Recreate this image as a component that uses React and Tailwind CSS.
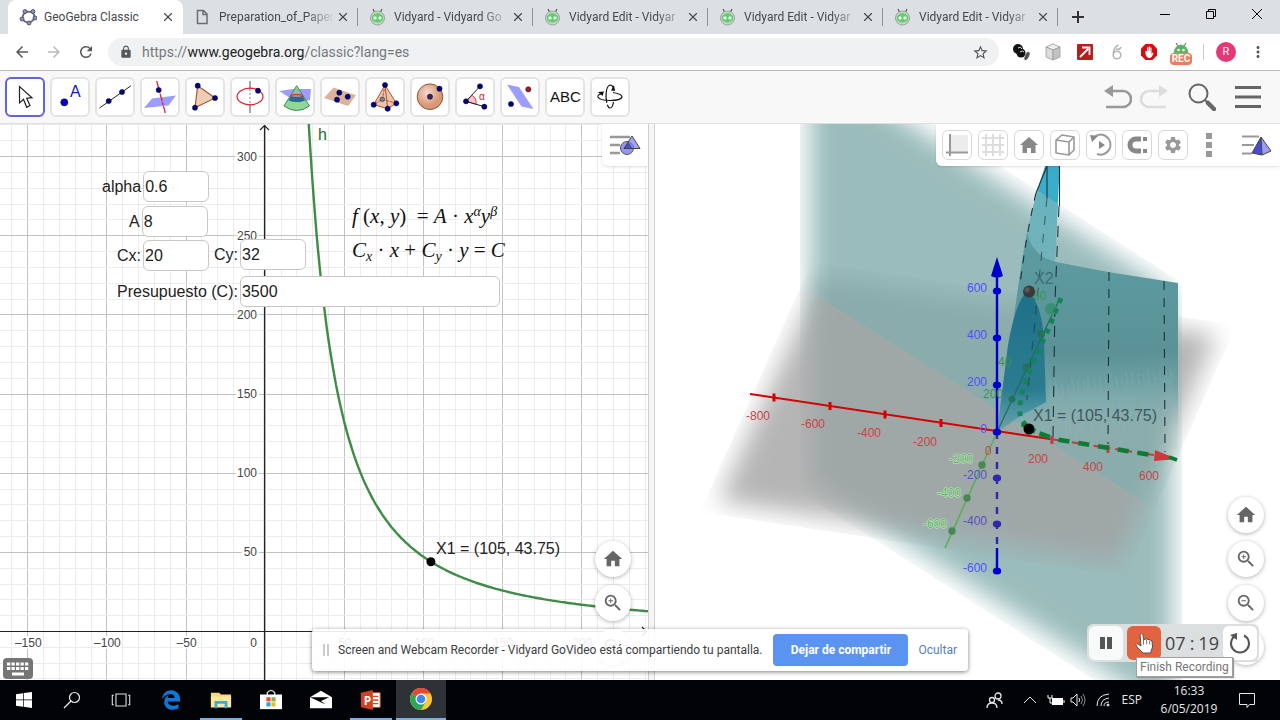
import React from "react";
import { FaEdgeLegacy } from "react-icons/fa6";
import { MdHome, MdZoomIn, MdZoomOut, MdSettings, MdLock, MdArrowBack, MdArrowForward, MdRefresh, MdStarBorder, MdMoreVert } from "react-icons/md";
import { FiX } from "react-icons/fi";

const NAVY = "#00008b";

function Dot({ x, y, r = 2.6, fill = NAVY }) {
  return <circle cx={x} cy={y} r={r} fill={fill} stroke="#111" strokeWidth="0.5" />;
}

/* ---------- browser chrome ---------- */

function GeoGebraLogo() {
  const pts = [[6, 3.5], [14, 3.5], [16, 10], [10, 15], [3, 11]];
  return (
    <svg viewBox="0 0 18 18" className="h-[18px] w-[18px] shrink-0">
      <ellipse cx="9.5" cy="9" rx="6" ry="5.3" transform="rotate(-15 9.5 9)" fill="none" stroke="#666" strokeWidth="1.8" />
      {pts.map(([x, y]) => (
        <circle key={x} cx={x} cy={y} r="2" fill="#8f8fe0" stroke="#444" strokeWidth="0.8" />
      ))}
    </svg>
  );
}

function FileIcon() {
  return (
    <svg viewBox="0 0 18 18" className="h-[18px] w-[18px] shrink-0" fill="none" stroke="#6b6f73" strokeWidth="1.5">
      <path d="M3.500 2.500h6l3.500 3.500v9.500h-9.500z M9 2.500v4h4" />
    </svg>
  );
}

function VidyardIcon() {
  return (
    <svg viewBox="0 0 18 18" className="h-[18px] w-[18px] shrink-0">
      <path d="M4 1l2 4M13 1l-2 4" stroke="#555" strokeWidth="1.200" />
      <circle cx="8.500" cy="10" r="7" fill="#c9d3cc" stroke="#8b968f" strokeWidth="0.8" />
      <path d="M3 8q5.500-6 11 0v4q-5.500 5-11 0z" fill="#5fd068" />
      <rect x="4.500" y="8.500" width="3" height="3" rx="1" fill="#fff" />
      <rect x="9.500" y="8.500" width="3" height="3" rx="1" fill="#fff" />
    </svg>
  );
}

const tabs = [
  { title: "GeoGebra Classic", icon: <GeoGebraLogo />, active: true },
  { title: "Preparation_of_Paper", icon: <FileIcon /> },
  { title: "Vidyard - Vidyard Go", icon: <VidyardIcon /> },
  { title: "Vidyard Edit - Vidyar", icon: <VidyardIcon /> },
  { title: "Vidyard Edit - Vidyar", icon: <VidyardIcon /> },
  { title: "Vidyard Edit - Vidyar", icon: <VidyardIcon /> },
];

function Tab({ title, icon, active }) {
  return (
    <div
      className={
        active
          ? "flex h-[34px] w-[175px] min-w-0 items-center rounded-t-lg bg-white pl-[11px] pr-[7px]"
          : "relative flex h-[34px] w-[175px] min-w-0 items-center pl-[11px] pr-[7px] after:absolute after:right-0 after:top-2 after:h-[18px] after:w-px after:bg-[#8f9296]"
      }
    >
      {icon}
      <a
        href="#tab"
        className={
          active
            ? "ml-[7px] min-w-0 flex-1 whitespace-nowrap text-xs text-[#45494d]"
            : "ml-[7px] min-w-0 flex-1 overflow-hidden whitespace-nowrap text-xs text-[#45494d] [mask-image:linear-gradient(to_right,#000_75%,transparent)]"
        }
      >
        {title}
      </a>
      <button aria-label="Close tab" className="grid h-4 w-4 shrink-0 place-items-center text-[#45494d]">
        <FiX className="text-sm" />
      </button>
    </div>
  );
}

function TabStrip() {
  return (
    <div className="flex h-[34px] shrink-0 bg-[#dcdfe4] pl-2">
      {tabs.map((tab, i) => (
        <Tab key={i} {...tab} />
      ))}
      <button aria-label="New tab" className="grid w-10 place-items-center text-[#333]">
        <svg viewBox="0 0 12 12" className="h-3 w-3" stroke="currentColor" strokeWidth="2"><path d="M6 0v12M0 6h12" /></svg>
      </button>
      <div className="ml-auto flex h-7 text-black">
        <button aria-label="Minimize" className="grid w-[46px] place-items-center">
          <svg viewBox="0 0 12 12" className="h-3 w-3" stroke="currentColor"><path d="M1 6.500h10" /></svg>
        </button>
        <button aria-label="Restore" className="grid w-[46px] place-items-center">
          <svg viewBox="0 0 12 12" className="h-3 w-3" fill="none" stroke="currentColor"><path d="M1.500 3.500h7v7h-7z M3.500 3.500v-2h7v7h-2" /></svg>
        </button>
        <button aria-label="Close" className="grid w-[46px] place-items-center">
          <svg viewBox="0 0 12 12" className="h-3 w-3" stroke="currentColor"><path d="M1 1l10 10M11 1l-10 10" /></svg>
        </button>
      </div>
    </div>
  );
}

function Extensions() {
  return (
    <div className="flex items-center">
      <button aria-label="Extension" className="grid w-8 place-items-center">
        <svg viewBox="0 0 18 18" className="h-[18px] w-[18px]">
          <circle cx="6" cy="6" r="5" fill="#111" />
          <circle cx="9" cy="10" r="4.500" fill="#111" />
          <path d="M6 5q3-2 4 1M8 9q3-2 4 0" stroke="#ddd" fill="none" />
          <ellipse cx="15" cy="13" rx="2" ry="4.500" transform="rotate(25 15 13)" fill="#555" />
        </svg>
      </button>
      <button aria-label="3D viewer" className="grid w-8 place-items-center">
        <svg viewBox="0 0 18 18" className="h-[18px] w-[18px]" stroke="#9a9a9a" strokeWidth="0.8">
          <path d="M9 1l7 3-7 3-7-3z" fill="#efefef" />
          <path d="M2 4l7 3v10l-7-3z" fill="#dcdcdc" />
          <path d="M16 4l-7 3v10l7-3z" fill="#c2c2c2" />
        </svg>
      </button>
      <button aria-label="Picker" className="grid w-8 place-items-center">
        <svg viewBox="0 0 18 18" className="h-[18px] w-[18px]">
          <rect x="1" y="1" width="16" height="16" rx="1" fill="#b3201f" />
          <path d="M4 14l8-8M6 4.500h7.500V12" stroke="#fff" strokeWidth="1.800" fill="none" />
        </svg>
      </button>
      <button aria-label="Pear" className="grid w-8 place-items-center">
        <svg viewBox="0 0 18 18" className="h-[18px] w-[18px]" fill="none" stroke="#b5b5b5" strokeWidth="1.600">
          <circle cx="9" cy="12" r="3.800" />
          <path d="M5.500 11q0-7 5-9M8 6q4 1 5-2" />
        </svg>
      </button>
      <button aria-label="Ad blocker" className="grid w-8 place-items-center">
        <svg viewBox="0 0 18 18" className="h-[18px] w-[18px]">
          <path d="M5.500 1h7L17 5.500v7L12.500 17h-7L1 12.500v-7z" fill="#d40d12" />
          <path d="M5.500 8v3q1 4 4 4 2.500 0 4-5l-1-.5-1 1.500V4.500h-1.200V8H10V3.500H8.800V8h-.5V4.500H7V8z" fill="#fff" />
        </svg>
      </button>
      <button aria-label="Vidyard recording" className="flex w-8 flex-col items-center pt-1">
        <svg viewBox="0 0 18 10" className="h-[10px] w-[18px]">
          <path d="M4 0l2 3M14 0l-2 3" stroke="#555" />
          <path d="M2 10q1-8 7-8t7 8z" fill="#4fb65a" stroke="#8a8" />
          <circle cx="6.500" cy="7" r="1.300" fill="#fff" /><circle cx="11.500" cy="7" r="1.300" fill="#fff" />
        </svg>
        <span className="rounded-sm bg-[#ec7c5c] px-[2px] text-[10px] font-bold leading-3 text-white">REC</span>
      </button>
    </div>
  );
}

function AddressBar() {
  return (
    <div className="flex h-[37px] shrink-0 items-center border-b border-[#b9b9b9] bg-white pr-[13px] text-[#55585c]">
      <div className="flex w-[108px] items-center pl-[6px] text-[18px]">
        <button aria-label="Back" className="grid w-8 place-items-center"><MdArrowBack /></button>
        <button aria-label="Forward" className="grid w-8 place-items-center text-[#b8babc]"><MdArrowForward /></button>
        <button aria-label="Reload" className="grid w-8 place-items-center"><MdRefresh /></button>
      </div>
      <div className="flex h-7 flex-1 items-center rounded-full bg-[#eff1f2] pl-[11px] pr-[10px]">
        <MdLock className="text-[14px]" />
        <a href="#page" className="ml-[9px] text-sm text-[#75797d]">
          https://<span className="text-[#222]">www.geogebra.org</span>/classic?lang=es
        </a>
        <button aria-label="Bookmark" className="ml-auto"><MdStarBorder className="text-[17px]" /></button>
      </div>
      <div className="ml-[6px] mr-[6px]"><Extensions /></div>
      <span className="h-4 w-px bg-[#c8c8c8]" />
      <button className="ml-3 grid h-5 w-5 place-items-center rounded-full bg-[#e63777] text-[11px] text-white">R</button>
      <button aria-label="Menu" className="ml-[13px]"><MdMoreVert className="text-lg" /></button>
    </div>
  );
}

/* ---------- GeoGebra tool bar ---------- */

const tools = [
  {
    name: "Move",
    art: <path d="M14.500 9.500v16.500l4-3.700 3.200 8 3.300-1.800-3.300-7.300 5.300-.5z" fill="#fff" stroke="#222" strokeWidth="1.200" />,
  },
  {
    name: "Point",
    art: <><Dot x={14.300} y={25.300} r={3.600} fill="#0000cd" /><text x="20" y="20" fontSize="16" fill="#1515cc">A</text></>,
  },
  {
    name: "Line",
    art: <><path d="M4.500 31L36 8.700" stroke="#222" /><Dot x={13.700} y={24} /><Dot x={27} y={15} /></>,
  },
  {
    name: "Perpendicular line",
    art: (
      <>
        <path d="M4 31l8-9.500 24-3-7.500 10z" fill="#9d9dff" />
        <path d="M16.700 4l8.600 32" stroke="#e0203c" strokeWidth="1.300" strokeDasharray="8 1 3 1" />
        <Dot x={18.700} y={13} />
      </>
    ),
  },
  {
    name: "Polygon",
    art: <><path d="M12.700 8.700L30 21 10 30.700z" fill="#f1cdb8" stroke="#a55a35" strokeWidth="1.200" /><Dot x={12.700} y={8.700} /><Dot x={30} y={21} /><Dot x={10} y={30.700} /></>,
  },
  {
    name: "Circle with axis",
    art: (
      <>
        <path d="M20 4v8M20 27v9" stroke="#888" strokeWidth="1.500" /><path d="M20 12v15" stroke="#888" strokeDasharray="2 2" />
        <ellipse cx="20" cy="19.500" rx="13" ry="8.300" fill="none" stroke="#d8202c" strokeWidth="1.200" />
        <Dot x={28} y={13.700} />
      </>
    ),
  },
  {
    name: "Intersect surfaces",
    art: (
      <>
        <path d="M4 14l14-2 18 0-1 11-12 3z" fill="#9d9dff" />
        <path d="M21.700 8.700L9 29q12.700 9 25.500 0z" fill="#7bd08a" fillOpacity="0.85" stroke="#3a8f48" />
        <path d="M16 19l-2.500 4.500q8 3 16.500 0L27.500 19z" fill="#31659c" />
        <ellipse cx="21.700" cy="19" rx="6" ry="1.600" fill="#7a9cae" stroke="#d8202c" />
      </>
    ),
  },
  {
    name: "Plane through 3 points",
    art: <><path d="M4 21l9.500-10.500L36 18.300 28 29z" fill="#dbb29c" /><Dot x={19.300} y={15.700} /><Dot x={17} y={22.700} /><Dot x={27.700} y={19.700} /></>,
  },
  {
    name: "Pyramid",
    art: (
      <>
        <path d="M20 8L8.700 27.700l14 4 8.600-5.400z" fill="#edc3aa" stroke="#a55a35" />
        <path d="M20 8l2.700 23.700" stroke="#a55a35" />
        <path d="M20 8l-2.700 14.300-8.600 5.400M17.300 22.300l14 4" fill="none" stroke="#a55a35" strokeDasharray="3 1" />
        <Dot x={17.300} y={22.300} r={2.300} fill="#8b7d92" /><Dot x={20} y={8} /><Dot x={8.700} y={27.700} /><Dot x={22.700} y={31.700} /><Dot x={31.300} y={26.300} />
      </>
    ),
  },
  {
    name: "Sphere",
    art: <><circle cx="20" cy="19.700" r="12.800" fill="url(#ball)" stroke="#8d5437" /><Dot x={20} y={19.700} fill="#3b1f66" /><Dot x={29.500} y={11.700} /></>,
  },
  {
    name: "Angle",
    art: (
      <>
        <path d="M11 24.300l6-6q5 3 4 9z" fill="#ffc4c8" stroke="#e04050" />
        <path d="M25 9.300L11 24.300l18.300 5.400" fill="none" stroke="#222" />
        <text x="24" y="23" fontSize="10" fill="#d8202c">α</text>
        <Dot x={25} y={9.300} /><Dot x={11} y={24.300} /><Dot x={29.300} y={29.700} />
      </>
    ),
  },
  {
    name: "Reflect about plane",
    art: <><path d="M7 7.500l12 2.500 14.500 22-12-2.500z" fill="#9d9dff" /><Dot x={28.300} y={12.300} fill="#b81420" /><Dot x={11} y={27} /></>,
  },
  { name: "Text", art: <text x="20.500" y="25" fontSize="15" textAnchor="middle" fill="#111">ABC</text> },
  {
    name: "Rotate view",
    art: (
      <g fill="none" stroke="#111" strokeWidth="1.200">
        <path d="M12 16.500q-5 1.500-4 3.500 2 3.500 12 3.500 11 0 12-3.500 0-3-9-4.500" />
        <path d="M24 13q-1-5-4-5-4 1-4 12 1 11 4 11 2.500 0 3.500-6" strokeDasharray="26 2" />
        <path d="M21 13.500l4 .5-1-6zM8 15l6-.5-1.500 4.500z" fill="#111" stroke="none" />
      </g>
    ),
  },
];

function ToolBar() {
  return (
    <div className="flex h-[53px] shrink-0 items-center gap-[5px] border-b border-[#dedede] bg-[#f8f8f8] pl-[5px] pr-[19px]">
      {tools.map((tool, i) => (
        <button
          key={tool.name}
          aria-label={tool.name}
          className={
            i === 0
              ? "h-10 w-10 rounded-md border-2 border-[#6464d2] bg-white"
              : "h-10 w-10 rounded-md border-2 border-[#e4e4e4] bg-white"
          }
        >
          <svg viewBox="2 2 36 36" className="h-9 w-9" fontFamily="Liberation Sans">
            <defs>
              <radialGradient id="ball" cx="40%" cy="35%"><stop offset="0" stopColor="#f3d9cb" /><stop offset="1" stopColor="#d89878" /></radialGradient>
            </defs>
            {tool.art}
          </svg>
        </button>
      ))}
      <div className="ml-auto flex items-center text-[#666]">
        <button aria-label="Undo" className="mr-2 text-[#999]">
          <svg viewBox="0 0 28 26" className="h-[26px] w-7"><path d="M8 7h11a7 7 0 0 1 0 16H2" fill="none" stroke="currentColor" strokeWidth="2.600" /><path d="M0 7l9-6v12z" fill="currentColor" /></svg>
        </button>
        <button aria-label="Redo" className="mr-5 text-[#dcdcdc]">
          <svg viewBox="0 0 28 26" className="h-[26px] w-7"><path d="M20 7H9a7 7 0 0 0 0 16h17" fill="none" stroke="currentColor" strokeWidth="2.600" /><path d="M28 7l-9-6v12z" fill="currentColor" /></svg>
        </button>
        <button aria-label="Search" className="mr-[19px]">
          <svg viewBox="0 0 28 28" className="h-7 w-7"><circle cx="10.500" cy="10.500" r="9" fill="none" stroke="currentColor" strokeWidth="2" /><path d="M17 17l4 4" stroke="currentColor" strokeWidth="2" /><path d="M20 20l6 6" stroke="currentColor" strokeWidth="4.500" strokeLinecap="round" /></svg>
        </button>
        <button aria-label="Main menu">
          <svg viewBox="0 0 26 24" className="h-6 w-[26px]" stroke="currentColor" strokeWidth="3"><path d="M0 2.500h26M0 12h26M0 21.500h26" /></svg>
        </button>
      </div>
    </div>
  );
}

/* ---------- 2D graphics view ---------- */

const ORIGIN = { x: 264.700, y: 507 };
const UNIT = 1.583;

const toX = (x) => ORIGIN.x + x * UNIT;
const toY = (y) => ORIGIN.y - y * UNIT;

const curve = Array.from({ length: 230 }, (_, i) => {
  const x = 24 + i;
  return `${toX(x).toFixed(1)},${toY(43.750 * Math.pow(105 / x, 1.500)).toFixed(1)}`;
}).join(" ");

function Grid() {
  const cols = Array.from({ length: 42 }, (_, i) => (i - 16) * 10);
  const rows = Array.from({ length: 36 }, (_, i) => (i - 3) * 10);
  return (
    <g shapeRendering="crispEdges">
      {cols.map((x) => <path key={x} d={`M${Math.round(toX(x))} 0v560`} stroke={x % 50 ? "#ececec" : "#c2c2c2"} />)}
      {rows.map((y) => <path key={y} d={`M0 ${Math.round(toY(y))}h648`} stroke={y % 50 ? "#ececec" : "#c2c2c2"} />)}
    </g>
  );
}

function Plot() {
  return (
    <svg className="absolute inset-0 h-full w-full" fontFamily="Liberation Sans">
      <Grid />
      <path d="M264.500 2v558M0 507.500h646" stroke="#222" strokeWidth="1.200" />
      <path d="M260 6l4.500-4.500 4.500 4.500M642 503l4.500 4.500-4.500 4.500" fill="none" stroke="#222" strokeWidth="1.200" />
      <polyline points={curve} fill="none" stroke="#408c46" strokeWidth="2.400" />
      <g fontSize="12" fill="#444" stroke="#fff" strokeWidth="4" paintOrder="stroke">
        {[50, 100, 150, 200, 250, 300].map((v) => (
          <text key={v} x="257" y={toY(v) + 4.500} textAnchor="end">{v}</text>
        ))}
        {[-150, -100, -50, 50, 100, 150, 200].map((v) => (
          <text key={v} x={toX(v) + 1} y="523" textAnchor="middle">{v < 0 ? `–${-v}` : v}</text>
        ))}
        <text x="257" y="523" textAnchor="end">0</text>
      </g>
      <circle cx={toX(105)} cy={toY(43.750)} r="4.500" />
      <text x="436" y="430" fontSize="16" fill="#222">X1 = (105, 43.75)</text>
      <text x="318" y="16" fontSize="16" fill="#1f6b28">h</text>
    </svg>
  );
}

const fields = [
  { id: "alpha", label: "alpha", value: "0.6", place: "left-[102px] top-[47px]", width: "w-[66px]" },
  { id: "a", label: "A", value: "8", place: "left-[129px] top-[82px]", width: "w-[66px]" },
  { id: "cx", label: "Cx:", value: "20", place: "left-[117px] top-[116px]", width: "w-[66px]" },
  { id: "cy", label: "Cy:", value: "32", place: "left-[214px] top-[115px]", width: "w-[66px]" },
  { id: "budget", label: "Presupuesto (C):", value: "3500", place: "left-[117px] top-[152px]", width: "w-[260px]" },
];

function Field({ id, label, value, place, width }) {
  return (
    <div className={`absolute flex items-center gap-[2px] font-['Liberation_Sans',sans-serif] text-base text-[#222] ${place}`}>
      <label htmlFor={id} className="whitespace-nowrap">{label}</label>
      <input id={id} defaultValue={value} className={`h-[31px] rounded-md border border-[#c8c8c8] bg-white px-px ${width}`} />
    </div>
  );
}

function RoundButton({ label, children }) {
  return (
    <button aria-label={label} className="grid h-9 w-9 place-items-center rounded-full bg-white text-[22px] text-[#666] shadow-[0_1px_4px_rgba(0,0,0,0.3)]">
      {children}
    </button>
  );
}

function ZoomButtons() {
  return (
    <>
      <RoundButton label="Home"><MdHome /></RoundButton>
      <RoundButton label="Zoom in"><MdZoomIn /></RoundButton>
      <RoundButton label="Zoom out"><MdZoomOut /></RoundButton>
    </>
  );
}

function GraphView() {
  return (
    <section className="relative min-w-0 flex-[648] overflow-hidden bg-white">
      <Plot />
      {fields.map((f) => <Field key={f.id} {...f} />)}
      <div className="absolute left-[352px] top-[75px] whitespace-pre font-['Liberation_Serif',serif] text-[21px] leading-[34px] text-[#111]">
        <p><i>f</i> (<i>x</i>, <i>y</i>)  = <i>A</i> · <i>x</i><sup className="text-sm italic">α</sup><i>y</i><sup className="text-sm italic">β</sup></p>
        <p><i>C</i><sub className="text-sm italic">x</sub> · <i>x</i> + <i>C</i><sub className="text-sm italic">y</sub> · <i>y</i> = <i>C</i></p>
      </div>
      <button aria-label="Style bar" className="absolute right-0 top-0 grid h-[42px] w-[46px] place-items-center rounded-bl-md bg-white shadow">
        <svg viewBox="0 0 32 24" className="h-6 w-8">
          <path d="M1 4h20M1 12h10M1 20h10" stroke="#999" strokeWidth="2.400" />
          <circle cx="18" cy="15" r="6.500" fill="#9797f2" stroke="#555" />
          <path d="M23 3l8 12.500H15z" fill="#7d7df0" fillOpacity="0.7" stroke="#444" />
          <path d="M19.500 9l4 6.500H15z" fill="#2a2a9c" fillOpacity="0.6" />
        </svg>
      </button>
      <div className="absolute bottom-[15px] right-[17px] flex flex-col gap-2"><ZoomButtons /></div>
      <button aria-label="Keyboard" className="absolute bottom-px left-[3px] grid h-[21px] w-[30px] place-items-center rounded bg-[#757575] text-white">
        <svg viewBox="0 0 24 16" className="h-4 w-6" fill="currentColor">
          {[1, 5.500, 10, 14.500, 19].map((x) => <path key={x} d={`M${x} 1.500h3.300v3h-3.300zM${x} 6h3.300v3h-3.300z`} />)}
          <path d="M6 11.500h12v3H6z" />
        </svg>
      </button>
    </section>
  );
}

/* ---------- 3D graphics view ---------- */

const zTicks = [[291, "600"], [338, "400"], [385, "200"], [432, "0"], [478, "-200"], [524, "-400"], [571, "-600"]];
const redLabels = [[746, 420, "-800"], [801, 428, "-600"], [857, 437, "-400"], [913, 446, "-200"], [985, 455, "0"], [1028, 463, "200"], [1083, 471, "400"], [1139, 480, "600"]];
const greenLabels = [[949, 463, "-200"], [937, 497, "-400"], [923, 528, "-600"], [983, 398, "200"], [998, 366, "40"], [1033, 300, "60"]];
const stripes = Array.from({ length: 62 }, (_, i) => ({ x: 1050 + i * 2, y: 380 + ((i * 7) % 19) - i / 4, h: 26 + ((i * 11) % 24) }));

const BACK = "M801 286L811 262 1236 325 1155 509z";
const FRONT = "M801 286L1155 509 1126 576 700 512z";
const WALL = "M800 38L1182 283V736L800 492z";
const BODY = "M1047 160Q1028 215 1020 275L997 432 1048 402 1060 160z";
const CURTAIN = "M1027 232Q1032 256 1056 262L1108 272 1178 283V450L1050 432 997 432 1020 275z";

function Scene() {
  return (
    <svg viewBox="655 124 625 556" preserveAspectRatio="xMidYMid slice" className="absolute inset-0 h-full w-full" fontFamily="Liberation Sans">
      <defs>
        <filter id="soft" x="-20%" y="-20%" width="140%" height="140%"><feGaussianBlur stdDeviation="12" /></filter>
        <mask id="floorEdge" maskUnits="userSpaceOnUse" x="655" y="124" width="625" height="556">
          <path d="M719 501L821 276 1216 335 1118 562z" fill="#fff" filter="url(#soft)" />
        </mask>
        <mask id="wallEdge" maskUnits="userSpaceOnUse" x="655" y="0" width="625" height="800">
          <path d="M810 60L1172 292V714L810 482z" fill="#fff" filter="url(#soft)" />
        </mask>
        <clipPath id="wall"><path d={WALL} /></clipPath>
        <linearGradient id="curtain" x1="0" y1="0" x2="0" y2="1">
          <stop offset="0" stopColor="#5b9da2" />
          <stop offset="0.550" stopColor="#5b9297" />
          <stop offset="0.700" stopColor="#659ca0" stopOpacity="0.8" />
          <stop offset="0.900" stopColor="#7fb4b6" stopOpacity="0.1" />
        </linearGradient>
        <linearGradient id="cone" x1="0" y1="0" x2="0" y2="1">
          <stop offset="0" stopColor="#1d7188" />
          <stop offset="0.700" stopColor="#2b7c90" />
          <stop offset="1" stopColor="#4d97a4" stopOpacity="0.5" />
        </linearGradient>
        <radialGradient id="bead" cx="35%" cy="35%"><stop offset="0" stopColor="#666" /><stop offset="0.700" stopColor="#3c3636" /></radialGradient>
      </defs>

      <path d={BACK} fill="#b5b5b5" mask="url(#floorEdge)" />
      <path d={BODY} fill="#3aaccb" />
      <path d={WALL} fill="#7fa9a9" fillOpacity="0.78" mask="url(#wallEdge)" />
      <path d={BODY} fill="#70b6be" fillOpacity="0.75" clipPath="url(#wall)" />
      <path d={FRONT} fill="#a1a1a1" fillOpacity="0.79" mask="url(#floorEdge)" />
      <path d={CURTAIN} fill="url(#curtain)" />
      <path d="M1028 290Q1042 305 1044 340L1046 402 1020 416 997 432 1008 345Q1016 300 1028 290z" fill="url(#cone)" />
      {stripes.map((s) => <path key={s.x} d={`M${s.x} ${s.y}v${s.h}`} stroke="#9fc4c4" strokeOpacity="0.25" />)}

      <g fill="none" stroke="#1f3338" strokeWidth="1.100">
        <path d="M1036 193Q1026 235 1020 285" strokeDasharray="8 8" />
        <path d="M1047 198L1040 270 1027 400" strokeDasharray="9 9" strokeOpacity="0.6" />
        <path d="M1047 160v38M1059.500 160v46M1047 166l-11 27" />
        <path d="M1059 206L1055 300 1053 438" strokeDasharray="11 9" />
        <path d="M1109 272L1108 444M1164 281L1165 452" strokeDasharray="9 8" />
      </g>

      <path d="M997 432L1058 302" stroke="#28695f" strokeWidth="1.200" />
      <path d="M997 432L945 548" stroke="#55b055" strokeWidth="1.500" />
      <g fill="#27705c">
        <circle cx="1012" cy="399" r="3.500" /><circle cx="1026" cy="367" r="3.500" /><circle cx="1041" cy="334" r="4" />
        <circle cx="1051" cy="309" r="6" fill="#3b8f76" />
      </g>
      <g fill="#4b8752"><circle cx="952" cy="531" r="3.700" /><circle cx="967" cy="498" r="3.700" /><circle cx="982" cy="465" r="3.700" /></g>

      <path d="M750 394L1050 439" stroke="#d40000" strokeWidth="2" />
      <path d="M1050 439L1160 456" stroke="#b84040" strokeWidth="2" strokeDasharray="17 5" />
      {[[774, 397.500], [830, 406], [885, 414.500], [941, 423], [1052, 440], [1108, 449]].map(([x, y]) => (
        <path key={x} d={`M${x} ${y - 4}v8`} stroke={x > 1000 ? "#b84040" : "#d40000"} strokeWidth="3" />
      ))}

      <path d="M997 272v160M997 548v23" stroke="#0000c8" strokeWidth="2.400" />
      <path d="M997 432v118" stroke="#2b2ba8" strokeWidth="2.400" strokeDasharray="7 8" />
      <path d="M997 257l6 19q-6 3-12 0z" fill="#0000c8" />
      {zTicks.map(([y, label]) => (
        <g key={y}>
          <ellipse cx="997" cy={y} rx="4.200" ry="3.500" fill={y > 450 && y < 560 ? "#2b2ba8" : "#0000d0"} />
          <text x="987" y={y + 1} fontSize="12" textAnchor="end" fill={y > 450 && y < 560 ? "#5353c8" : "#5050ff"}>{label}</text>
        </g>
      ))}
      <g fontSize="12" fill="#c94444">
        {redLabels.map(([x, y, label]) => <text key={x} x={x} y={y}>{label}</text>)}
      </g>
      <g fontSize="12">
        {greenLabels.map(([x, y, label]) => (
          <text key={label} x={x} y={y} fill={y > 450 ? "#5cb860" : "#3b9150"} stroke="#c8e8c8" strokeWidth={y > 450 ? 1 : 0} paintOrder="stroke">{label}</text>
        ))}
      </g>

      <path d="M1061 298Q1046 336 1034 360 1018 396 1020 414 1022 428 1046 436" fill="none" stroke="#128558" strokeWidth="5" strokeDasharray="5 6" />
      <path d="M1022 424Q1034 433 1060 440L1176 459" fill="none" stroke="#0e7b35" strokeWidth="4.500" strokeDasharray="11 9" />
      <path d="M1155 450L1177 459 1154 461z" fill="#cc3a3a" />
      <path d="M1169 457l8 3" stroke="#0e7b35" strokeWidth="4" />
      <circle cx="1029" cy="291.500" r="6" fill="url(#bead)" />
      <circle cx="1029" cy="429" r="5.500" />
      <text x="1034" y="284" fontSize="16" fill="#3f6d74">X2</text>
      <text x="1033" y="421" fontSize="16" fill="#41575b">X1 = (105, 43.75)</text>
    </svg>
  );
}

const viewTools = [
  ["Axes", <><path d="M5 3h19v18H5z" fill="#ececec" /><path d="M6 2v22M2 20.500h22" stroke="#999" strokeWidth="2" /></>],
  ["Grid", <path d="M6 2v22M13 2v22M20 2v22M2 6h22M2 13h22M2 20h22" stroke="#ddd" strokeWidth="2" />],
  ["Standard view", <path d="M13 5l9 8h-2.500v8H15v-5h-4v5H6.500v-8H4z" fill="#888" />],
  ["Projection", <path d="M4 8l6-5 12 2-5 5zM4 8v13l13 2V10M17 23l5-5V5" fill="none" stroke="#999" strokeWidth="1.600" strokeLinejoin="round" />],
  ["Rotate", <><path d="M5 6a10 10 0 1 1 4 16" fill="none" stroke="#999" strokeWidth="2" /><path d="M2 3l8 1-6 6zM11 9l6 4-6 4z" fill="#888" /></>],
  ["Snap", <><path d="M17 7h-5a6 6 0 0 0 0 12h5" fill="none" stroke="#888" strokeWidth="5" /><path d="M19 7h4M19 19h4" stroke="#888" strokeWidth="4" /></>],
];

function View3D() {
  return (
    <section className="relative min-w-0 flex-[625] overflow-hidden bg-white">
      <Scene />
      <div className="absolute right-0 top-0 flex h-[42px] items-center gap-[6px] rounded-bl-md bg-white pl-[6px] pr-[7px] shadow">
        {viewTools.map(([name, art]) => (
          <button key={name} aria-label={name} className="grid h-[30px] w-[30px] place-items-center rounded-md border border-[#d8d8d8] bg-white">
            <svg viewBox="0 0 26 26" className="h-[26px] w-[26px]">{art}</svg>
          </button>
        ))}
        <button aria-label="Settings" className="grid h-[30px] w-[30px] place-items-center rounded-md border border-[#d8d8d8] bg-white text-xl text-[#999]">
          <MdSettings />
        </button>
        <button aria-label="More" className="grid w-[30px] place-items-center">
          <svg viewBox="0 0 6 24" className="h-6 w-[6px]" fill="#999"><path d="M0 0h6v6H0zM0 9h6v6H0zM0 18h6v6H0z" /></svg>
        </button>
        <button aria-label="Style bar" className="ml-[9px] grid place-items-center">
          <svg viewBox="0 0 34 24" className="h-6 w-[34px]">
            <path d="M3 3.500h17M3 12h12M3 20.500h10" stroke="#999" strokeWidth="2.200" />
            <path d="M22 4L13 20l10 2z" fill="#4a4ad8" stroke="#444" /><path d="M22 4l1 18 9-4z" fill="#9c9cf5" stroke="#444" />
          </svg>
        </button>
      </div>
      <div className="absolute bottom-[15px] right-4 flex flex-col gap-2">
        <ZoomButtons />
        <RoundButton label="Full screen" />
      </div>
      <Recorder />
    </section>
  );
}

/* ---------- recording overlays ---------- */

function Recorder() {
  return (
    <div className="absolute bottom-[18px] right-[21px] flex items-center gap-1 rounded-md bg-[#dcdfdf] p-[2px]">
      <button aria-label="Pause" className="grid h-[34px] w-[34px] place-items-center rounded-md bg-[#f8faf9]">
        <svg viewBox="0 0 12 12" className="h-3 w-3" fill="#555"><path d="M0 0h5v12H0zM7 0h5v12H7z" /></svg>
      </button>
      <button aria-label="Finish Recording" className="grid h-[34px] w-[34px] place-items-center rounded-md bg-[#e0643f]">
        <svg viewBox="0 0 20 24" className="h-6 w-5">
          <path d="M6 3.500q1.500-2 3 0l.5 5 3-.5 3 .8 2.500 1.200.5 6-2 6H9L3 16q-2-3 0-3.500l4 2.500z" fill="#fff" stroke="#444" strokeWidth="0.9" />
          <path d="M9.500 8.500v5M12.500 9l.3 4.500M15.500 10l.2 3.500" stroke="#555" strokeWidth="0.8" />
        </svg>
      </button>
      <time className="flex w-[54px] justify-center gap-1 font-['Open_Sans',sans-serif] text-lg text-[#444]"><span>07</span><span>:</span><span>19</span></time>
      <button aria-label="Restart" className="grid h-[34px] w-[34px] place-items-center rounded-md bg-white">
        <svg viewBox="0 0 22 22" className="h-[22px] w-[22px]"><path d="M15 3.500a9 9 0 1 1-8 0" fill="none" stroke="#555" strokeWidth="2" /><path d="M1 3l7-2v7z" fill="#555" /></svg>
      </button>
      <span role="tooltip" className="absolute left-[49px] top-[33px] whitespace-nowrap border border-[#a0a0a0] bg-white px-[3px] text-xs leading-[18px] text-[#777] shadow-[1px_1px_1px_#999]">
        Finish Recording
      </span>
    </div>
  );
}

function ShareBar() {
  return (
    <div className="absolute bottom-[9px] left-1/2 flex h-[42px] w-[656px] -translate-x-1/2 items-center rounded-sm bg-white/90 px-[11px] text-xs text-[#3c4043] shadow-[0_1px_4px_rgba(0,0,0,0.5)]">
      <span className="mr-[9px] h-3 w-[6px] border-x-2 border-[#ccc]" />
      <p className="whitespace-nowrap">Screen and Webcam Recorder - Vidyard GoVideo está compartiendo tu pantalla.</p>
      <button className="ml-auto h-8 w-[135px] shrink-0 rounded bg-[#5b93f1] font-bold text-white">Dejar de compartir</button>
      <a href="#hide" className="ml-[10px] text-[#5380c4]">Ocultar</a>
    </div>
  );
}

/* ---------- Windows task bar ---------- */

const apps = [
  ["Task view", <path d="M6.500 5.500h11v13h-11zM4 7H2.500v10H4M20 7h1.500v10H20" fill="none" stroke="#ddd" strokeWidth="1.200" />],
  ["Edge", <FaEdgeLegacy size="22" x="1" y="1" color="#0d78d7" />],
  ["File Explorer", <><path d="M1 4h9l2 2h11v14H1z" fill="#f7d883" /><path d="M1 8h22v12H1z" fill="#fbe6a2" /><path d="M5 21v-8h14v8h-3v-5H8v5z" fill="#3fa8d8" /></>, true],
  ["Store", <><path d="M8 7V4q4-5 8 0v3" fill="none" stroke="#ddd" strokeWidth="1.500" /><path d="M0 6h24v16H0z" fill="#fff" /><path d="M7 9h4.500v4.500H7z" fill="#e8492c" /><path d="M12.500 9H17v4.500h-4.500z" fill="#7fb53a" /><path d="M7 14.500h4.500V19H7z" fill="#2f9fe0" /><path d="M12.500 14.500H17V19h-4.500z" fill="#f3b81f" /></>],
  ["Mail", <><path d="M0 9l12-7 12 7v12H0z" fill="#fff" /><path d="M0 9h21l-9 4 5 4z" fill="#000" /></>],
  ["PowerPoint", <><path d="M12 4h10v16H12z" fill="#fff" stroke="#cf4a27" /><path d="M14 8h6M14 12h6M14 16h6" stroke="#cf4a27" strokeWidth="1.500" /><path d="M1 4l13-3v22L1 20z" fill="#cf4120" /><text x="4" y="17" fontSize="13" fontWeight="bold" fill="#fff">P</text></>, true],
];

function ChromeLogo() {
  return (
    <svg viewBox="0 0 24 24" className="h-6 w-6">
      <circle cx="12" cy="12" r="11" fill="#fcc934" />
      <path d="M12 12L2.500 6.500A11 11 0 0 1 21.500 6.500H12z" fill="#e5463a" />
      <path d="M12 12L2.500 6.500A11 11 0 0 0 12 23l4.800-8.300z" fill="#2fa655" />
      <circle cx="12" cy="12" r="5.500" fill="#fff" /><circle cx="12" cy="12" r="4.300" fill="#4285f4" />
    </svg>
  );
}

function TaskBar() {
  return (
    <footer className="flex h-10 shrink-0 items-stretch bg-[#020307] font-['Open_Sans',sans-serif] text-xs text-white">
      <button aria-label="Start" className="grid w-12 place-items-center">
        <svg viewBox="0 0 16 16" className="h-4 w-4" fill="#fff"><path d="M0 2.200l7-1v6.400H0zM7.700 1.100L16 0v7.600H7.700zM0 8.300h7v6.500l-7-1zM7.700 8.300H16V16l-8.300-1.200z" /></svg>
      </button>
      <button aria-label="Search" className="grid w-12 place-items-center">
        <svg viewBox="0 0 18 18" className="h-[18px] w-[18px]" fill="none" stroke="#eee" strokeWidth="1.200"><circle cx="11.500" cy="6.500" r="5" /><path d="M8 10l-7 7" /></svg>
      </button>
      {apps.map(([name, art, open]) => (
        <button key={name} aria-label={name} className="relative grid w-[50px] place-items-center">
          <svg viewBox="0 0 24 24" className="h-[22px] w-[22px]">{art}</svg>
          {open && <span className="absolute bottom-0 left-1 h-[2px] w-[42px] bg-[#76b0e8]" />}
        </button>
      ))}
      <button aria-label="Chrome" className="grid w-[50px] place-items-center border-b-2 border-[#76b0e8] bg-[#2e3136]"><ChromeLogo /></button>

      <div className="ml-auto flex items-center text-[#e8e8e8]">
        <button aria-label="People" className="mr-[19px]">
          <svg viewBox="0 0 18 18" className="h-[18px] w-[18px]" fill="none" stroke="currentColor" strokeWidth="1.300"><circle cx="12" cy="5" r="3" /><circle cx="6" cy="9" r="2.500" /><path d="M1 17q0-5 5-5t5 5M12 9q4 0 4 4" /></svg>
        </button>
        <button aria-label="Hidden icons" className="mr-[10px]">
          <svg viewBox="0 0 14 8" className="h-2 w-[14px]" fill="none" stroke="currentColor"><path d="M1 7l6-6 6 6" /></svg>
        </button>
        <button aria-label="Battery" className="mr-[5px]">
          <svg viewBox="0 0 18 14" className="h-[14px] w-[18px]"><path d="M5 5h11v7H5z" fill="#fff" /><path d="M17 7v3M1 2v3h4V2M3 5v5h3" stroke="#fff" fill="none" /></svg>
        </button>
        <button aria-label="Volume" className="mr-[10px]">
          <svg viewBox="0 0 16 14" className="h-[14px] w-4" fill="none" stroke="currentColor"><path d="M1 5h2l4-4v12L3 9H1zM9 5q1 2 0 4" /><path d="M11 3q3 4 0 8M13 1q4 6 0 12" strokeOpacity="0.6" /></svg>
        </button>
        <button aria-label="Network" className="mr-3">
          <svg viewBox="0 0 14 14" className="h-[14px] w-[14px]" fill="none" stroke="currentColor"><path d="M1 13Q1 2 13 1M5 13q0-7 8-8M8 13q0-4 5-4" /><circle cx="12" cy="12" r="1" fill="currentColor" /></svg>
        </button>
        <span className="mr-[18px]">ESP</span>
        <time className="mr-5 w-[58px] text-center leading-[18px]">16:33<br />6/05/2019</time>
        <button aria-label="Notifications" className="mr-6">
          <svg viewBox="0 0 18 18" className="h-[18px] w-[18px]" fill="none" stroke="currentColor"><path d="M1.500 2.500h15v11h-5l-2.500 3v-3H1.500z" /></svg>
        </button>
      </div>
    </footer>
  );
}

export default function App() {
  return (
    <div className="flex h-screen flex-col overflow-hidden bg-white font-['Roboto',sans-serif]">
      <TabStrip />
      <AddressBar />
      <ToolBar />
      <main className="relative flex min-h-0 flex-1">
        <GraphView />
        <div className="w-[7px] shrink-0 border-x border-[#cfcfcf] bg-[#f5f5f5]" />
        <View3D />
        <ShareBar />
      </main>
      <TaskBar />
    </div>
  );
}
